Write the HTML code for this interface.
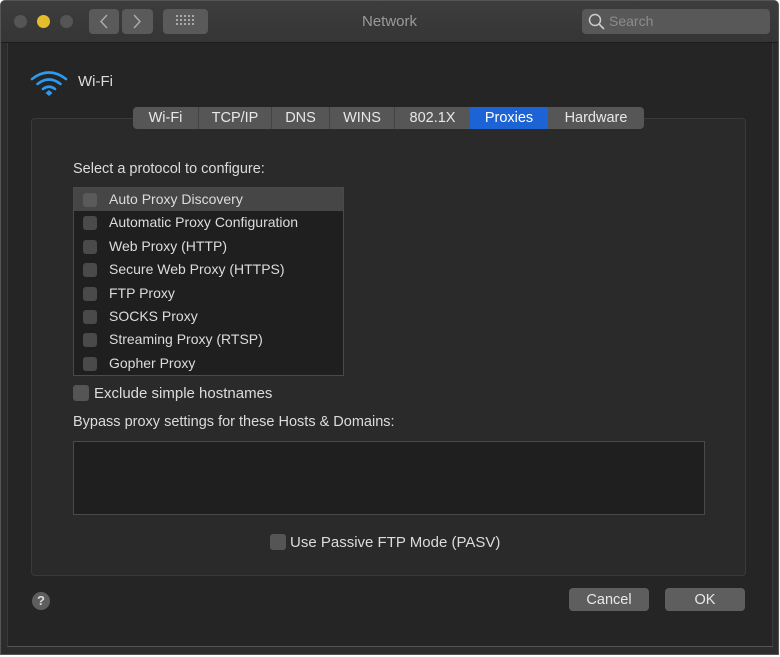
<!DOCTYPE html>
<html><head><style>
*{box-sizing:border-box;margin:0;padding:0}
body{width:780px;height:657px;background:#fff;font-family:"Liberation Sans",sans-serif;font-size:14px;color:#dcdcdc;position:relative;overflow:hidden}
.win{position:absolute;left:0;top:0;width:779px;height:655px;background:#2c2c2c;border:1px solid #555;border-radius:5px 5px 0 0;overflow:hidden}
.tb{position:absolute;left:0;top:0;right:0;height:42px;background:linear-gradient(#3d3d3d,#353535);border-bottom:1px solid #1c1c1c}
.dot{position:absolute;top:14px;width:13px;height:13px;border-radius:50%;background:#555}
.btn{position:absolute;background:#5a5a5a;border-radius:4px}
.sheet{position:absolute;left:6px;top:42px;width:766px;height:604px;background:#252525;border-left:1px solid #3a3a3a;border-right:1px solid #3a3a3a;border-bottom:1px solid #555}
.abs{position:absolute}
.cb{position:absolute;width:14px;height:14px;border-radius:3px;background:#4a4a4a}
.row{position:absolute;left:0;width:269px;height:23px;line-height:23px;padding-left:35px;font-size:14px}
</style></head><body>
<div class="win">
<div class="tb">
<div class="dot" style="left:13px"></div>
<div class="dot" style="left:36px;background:#e5bd2c"></div>
<div class="dot" style="left:59px"></div>
<div class="btn" style="left:88px;top:8px;width:30px;height:25px"></div>
<div class="btn" style="left:121px;top:8px;width:31px;height:25px"></div>
<svg class="abs" style="left:88px;top:8px" width="64" height="25"><path d="M18 6l-6 6.5 6 6.5M45 6l6 6.5-6 6.5" stroke="#aaa" stroke-width="1.5" fill="none"/></svg>
<div class="btn" style="left:162px;top:8px;width:45px;height:25px"></div>
<svg class="abs" style="left:175px;top:14px" width="20" height="14" fill="#aaa"><g><rect x="0" y="0" width="2" height="2"/><rect x="4" y="0" width="2" height="2"/><rect x="8" y="0" width="2" height="2"/><rect x="12" y="0" width="2" height="2"/><rect x="16" y="0" width="2" height="2"/><rect x="0" y="4" width="2" height="2"/><rect x="4" y="4" width="2" height="2"/><rect x="8" y="4" width="2" height="2"/><rect x="12" y="4" width="2" height="2"/><rect x="16" y="4" width="2" height="2"/><rect x="0" y="8" width="2" height="2"/><rect x="4" y="8" width="2" height="2"/><rect x="8" y="8" width="2" height="2"/><rect x="12" y="8" width="2" height="2"/><rect x="16" y="8" width="2" height="2"/></g></svg>
<div class="abs" style="left:0;right:0;top:12px;text-align:center;color:#9a9a9a;font-size:15px">Network</div>
<div class="btn" style="left:581px;top:8px;width:188px;height:25px;background:#585858"></div>
<svg class="abs" style="left:587px;top:12px" width="18" height="18"><circle cx="7" cy="7" r="5.5" stroke="#ccc" stroke-width="1.5" fill="none"/><path d="M11 11l5 5" stroke="#ccc" stroke-width="1.6"/></svg>
<div class="abs" style="left:608px;top:12px;color:#8c8c8c;font-size:14px">Search</div>
</div>
<div class="sheet">
<svg class="abs" style="left:22px;top:24px" width="40" height="30"><g stroke="#2d9af0" stroke-width="2.6" fill="none" stroke-linecap="round"><path d="M2 12Q19 -1 36 12"/><path d="M7.5 17Q19 8 30.5 17"/><path d="M13 22Q19 17.5 25 22"/></g><path d="M15.5 26L19 23L22.5 26L19 29Z" fill="#2d9af0"/></svg>
<div class="abs" style="left:70px;top:30px;font-size:15px;color:#ddd">Wi-Fi</div>
<div class="abs" style="left:23px;top:75px;width:715px;height:458px;background:#2a2a2a;border:1px solid #3a3a3a;border-radius:4px"></div>
<div class="abs" style="left:125px;top:64px;width:511px;height:22px;background:#565656;border-radius:4px;display:flex;font-size:14.5px;line-height:22px;color:#e8e8e8;overflow:hidden">
<div style="width:66px;text-align:center;border-right:1px solid #444">Wi-Fi</div>
<div style="width:73px;text-align:center;border-right:1px solid #444">TCP/IP</div>
<div style="width:58px;text-align:center;border-right:1px solid #444">DNS</div>
<div style="width:65px;text-align:center;border-right:1px solid #444">WINS</div>
<div style="width:75px;text-align:center">802.1X</div>
<div style="width:78px;text-align:center;background:#1c63d6;color:#fff">Proxies</div>
<div style="width:96px;text-align:center">Hardware</div>
</div>
<div class="abs" style="left:65px;top:118px;font-size:14.5px">Select a protocol to configure:</div>
<div class="abs" style="left:65px;top:144px;width:271px;height:189px;background:#1f1f1f;border:1px solid #4a4a4a">
<div class="row" style="top:0;background:#464646">Auto Proxy Discovery</div>
<div class="row" style="top:23.4px">Automatic Proxy Configuration</div>
<div class="row" style="top:46.8px">Web Proxy (HTTP)</div>
<div class="row" style="top:70.2px">Secure Web Proxy (HTTPS)</div>
<div class="row" style="top:93.6px">FTP Proxy</div>
<div class="row" style="top:117px">SOCKS Proxy</div>
<div class="row" style="top:140.4px">Streaming Proxy (RTSP)</div>
<div class="row" style="top:163.8px">Gopher Proxy</div>
<div class="cb" style="left:9px;top:5px;background:#5a5a5a"></div>
<div class="cb" style="left:9px;top:28.4px"></div>
<div class="cb" style="left:9px;top:51.8px"></div>
<div class="cb" style="left:9px;top:75.2px"></div>
<div class="cb" style="left:9px;top:98.6px"></div>
<div class="cb" style="left:9px;top:122px"></div>
<div class="cb" style="left:9px;top:145.4px"></div>
<div class="cb" style="left:9px;top:168.8px"></div>
</div>
<div class="cb" style="left:65px;top:342px;width:16px;height:16px;background:#555"></div>
<div class="abs" style="left:86px;top:342px;font-size:15px">Exclude simple hostnames</div>
<div class="abs" style="left:65px;top:371px;font-size:14.5px">Bypass proxy settings for these Hosts &amp; Domains:</div>
<div class="abs" style="left:65px;top:398px;width:632px;height:74px;background:#1f1f1f;border:1px solid #4a4a4a"></div>
<div class="cb" style="left:262px;top:491px;width:16px;height:16px;background:#555"></div>
<div class="abs" style="left:282px;top:491px;font-size:15px">Use Passive FTP Mode (PASV)</div>
<div class="abs" style="left:24px;top:549px;width:18px;height:18px;border-radius:50%;background:#5e5e5e;color:#ddd;font-size:13px;text-align:center;line-height:18px;font-weight:bold">?</div>
<div class="abs" style="left:561px;top:545px;width:80px;height:23px;background:#5e5e5e;border-radius:4px;text-align:center;line-height:24px;font-size:14.5px;color:#e8e8e8">Cancel</div>
<div class="abs" style="left:657px;top:545px;width:80px;height:23px;background:#5e5e5e;border-radius:4px;text-align:center;line-height:24px;font-size:14.5px;color:#e8e8e8">OK</div>
</div>
</div>
</body></html>
